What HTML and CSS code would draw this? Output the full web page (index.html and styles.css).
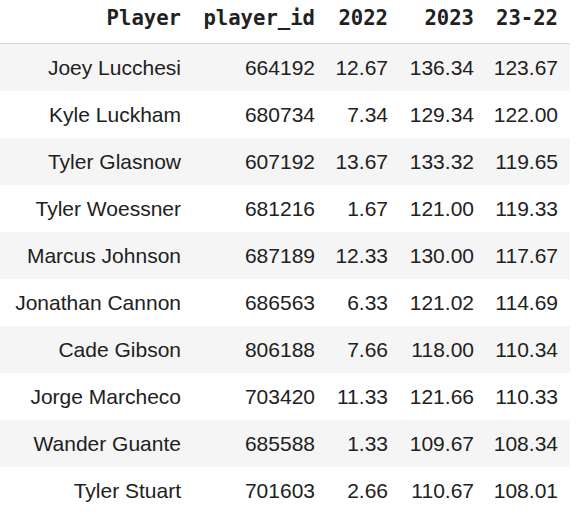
FILE: index.html
```html
<!DOCTYPE html>
<html lang="en">
<head>
    <meta charset="UTF-8">
    <meta name="viewport" content="width=device-width, initial-scale=1.0">
    <title>Players 23-22</title>
    <link rel="stylesheet" href="styles.css">
</head>
<body>
    <table class="dataframe">
        <colgroup>
            <col class="col-player">
            <col class="col-id">
            <col class="col-y22">
            <col class="col-y23">
            <col class="col-diff">
        </colgroup>
        <thead>
            <tr>
                <th>Player</th>
                <th>player_id</th>
                <th>2022</th>
                <th>2023</th>
                <th>23-22</th>
            </tr>
        </thead>
        <tbody id="rows"></tbody>
    </table>

    <script>
        // Datos de la tabla
        const players = [
            ["Joey Lucchesi", 664192, "12.67", "136.34", "123.67"],
            ["Kyle Luckham", 680734, "7.34", "129.34", "122.00"],
            ["Tyler Glasnow", 607192, "13.67", "133.32", "119.65"],
            ["Tyler Woessner", 681216, "1.67", "121.00", "119.33"],
            ["Marcus Johnson", 687189, "12.33", "130.00", "117.67"],
            ["Jonathan Cannon", 686563, "6.33", "121.02", "114.69"],
            ["Cade Gibson", 806188, "7.66", "118.00", "110.34"],
            ["Jorge Marcheco", 703420, "11.33", "121.66", "110.33"],
            ["Wander Guante", 685588, "1.33", "109.67", "108.34"],
            ["Tyler Stuart", 701603, "2.66", "110.67", "108.01"]
        ];

        const tbody = document.getElementById('rows');
        players.forEach(row => {
            const tr = document.createElement('tr');
            tr.innerHTML = row.map(value => `<td>${value}</td>`).join('');
            tbody.appendChild(tr);
        });
    </script>
</body>
</html>
```

FILE: styles.css
```css
/* General */
body, html {
    margin: 0;
    padding: 0;
    background-color: #ffffff;
    color: #212121;
}

/* Tabla */
.dataframe {
    width: 570px;
    table-layout: fixed;
    border-collapse: collapse;
    border-spacing: 0;
    font-family: "Liberation Sans", Arial, sans-serif;
    font-size: 21px;
}

.col-player { width: 191px; }
.col-id { width: 134px; }
.col-y22 { width: 73px; }
.col-y23 { width: 86px; }
.col-diff { width: 86px; }

.dataframe th {
    font-family: "DejaVu Sans Mono", monospace;
    font-weight: bold;
    font-size: 20.6px;
    line-height: 24px;
    text-align: right;
    padding: 6px 10px 13px 0;
    border-bottom: 1px solid #d6d6d6;
    white-space: nowrap;
}

.dataframe td {
    height: 47px;
    padding: 0 10px 0 0;
    text-align: right;
    vertical-align: middle;
    white-space: nowrap;
}

.dataframe th:last-child,
.dataframe td:last-child {
    padding-right: 12px;
}

.dataframe tbody tr:nth-child(odd) {
    background-color: #f5f5f5;
}
```
